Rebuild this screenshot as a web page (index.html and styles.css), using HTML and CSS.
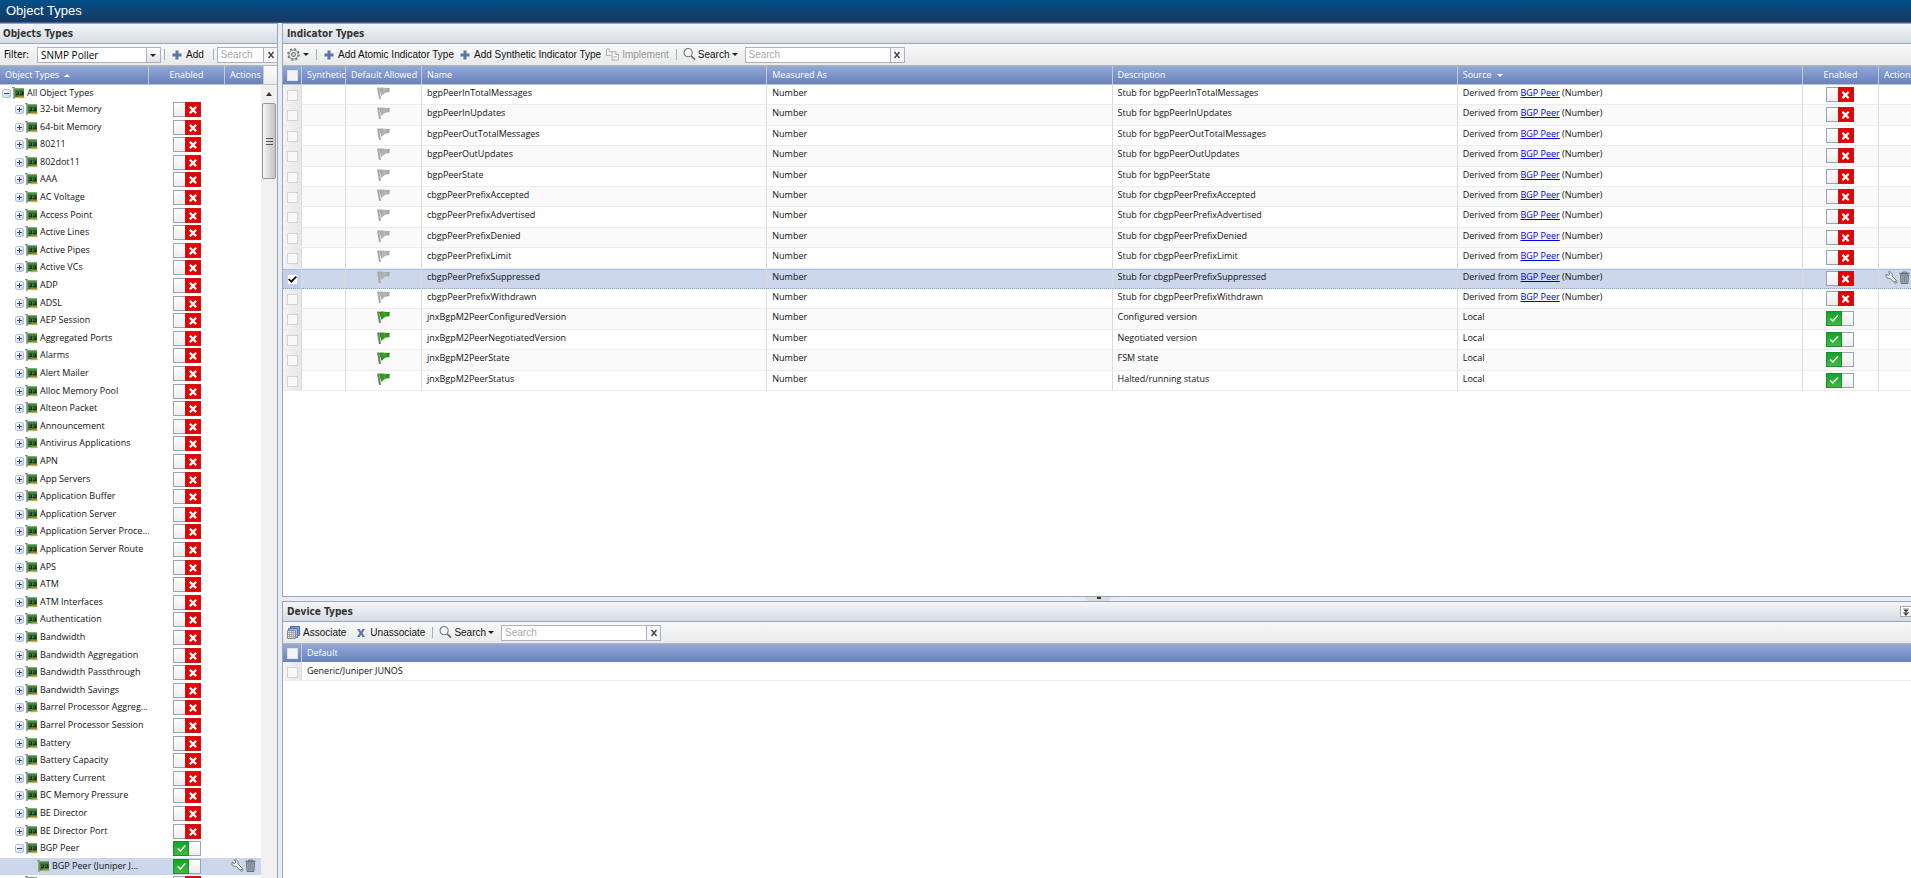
FILE: index.html
```html
<!DOCTYPE html>
<html lang="en">
<head>
<meta charset="utf-8">
<title>Object Types</title>
<link rel="stylesheet" href="styles.css">
</head>
<body>
<svg class="defs" aria-hidden="true">
  <linearGradient id="flag-green" x1="0" x2="1"><stop offset="0" stop-color="#1c8412"/><stop offset=".5" stop-color="#3fa81f"/><stop offset="1" stop-color="#1f7d12"/></linearGradient>
  <linearGradient id="flag-grey" x1="0" x2="1"><stop offset="0" stop-color="#a2a2a2"/><stop offset=".5" stop-color="#b8b8b8"/><stop offset="1" stop-color="#a0a0a0"/></linearGradient>
  <symbol id="plus" viewBox="0 0 10 10"><path d="M3.5 .5h3v3h3v3h-3v3h-3v-3h-3v-3h3z" fill="#5878ab"/></symbol>
  <symbol id="cross" viewBox="0 0 8 8"><path d="M0 0h2.6L4 2.4 5.4 0H8L5.4 4 8 8H5.4L4 5.6 2.6 8H0l2.6-4z" fill="#5577a5"/></symbol>
  <symbol id="close" viewBox="0 0 8 8"><path d="M1.500 1l5 6M6.500 1l-5 6" stroke="#3c3c3c" stroke-width="1.3"/></symbol>
  <symbol id="gear" viewBox="0 0 14 14"><g fill="none" stroke="#6b6f72"><circle cx="7" cy="7" r="6" stroke-width="1.400" stroke-dasharray="2.300 2.410"/><circle cx="7" cy="7" r="4.900" stroke-width="1"/><circle cx="7" cy="7" r="2" stroke-width="1.200"/></g></symbol>
  <symbol id="lens" viewBox="0 0 14 14"><circle cx="5.5" cy="5" r="4.4" fill="#f6f6f6" stroke="#74777a" stroke-width="1.2"/><path d="M8.8 8.5l4.200 4" stroke="#66696c" stroke-width="1.6"/></symbol>
  <symbol id="pages" viewBox="0 0 14 13"><g fill="#f4f4f4" stroke="#a9a9a9"><path d="M3.500.5h-3v7h5"/><path d="M3.500 .5v3h3"/><path d="M6.500 3.500h4l3 3v6h-7z"/><path d="M10.500 3.500v3h3M8 9h4"/></g></symbol>
  <symbol id="assoc" viewBox="0 0 13 13"><path d="M3.500.5h9v9h-9z" fill="#7c9ce0" stroke="#4869b5"/><path d="M1.500 2.500h9v9h-9z" fill="#a8bce8" stroke="#5576bd"/><path d="M.5 4.500h8v8h-8z" fill="#e4e4e4" stroke="#8a8a8a"/><path d="M2.500 5v7M4.500 5v7M6.500 5v7M1 6.500h7M1 8.500h7M1 10.500h7" stroke="#999" stroke-width=".7"/></symbol>
  <symbol id="board" viewBox="0 0 13 12"><path d="M0 .5h2V12" fill="none" stroke="#858c80" stroke-width="1.500"/><path d="M2.500 1.500H12v9H2.500z" fill="#3c8034"/><path d="M3 2h9" stroke="#5f9c52"/><path d="M4 4.500h3v3.500H4zM8 4.500h3.500v3.500H8z" fill="#17321a"/><path d="M6 9.500h6.500v1.700H6z" fill="#d9a441"/><path d="M4 6h2M8 6h2" stroke="#6a8068"/></symbol>
  <symbol id="flag-on" viewBox="0 0 13 12"><path d="M1 .5l2 11.500" stroke="#777" stroke-width="2"/><path d="M2 1C6 -.2 8 1.600 13 .8L12.300 3 12.600 5.200C9 4.800 7 6 4.500 9z" fill="url(#flag-green)"/></symbol>
  <symbol id="flag-off" viewBox="0 0 13 12"><path d="M1 .5l2 11.500" stroke="#a8a8a8" stroke-width="2"/><path d="M2 1C6 -.2 8 1.600 13 .8L12.300 3 12.600 5.200C9 4.800 7 6 4.500 9z" fill="url(#flag-grey)"/></symbol>
  <symbol id="wrench" viewBox="0 0 13 13"><path d="M3.500 .8L5 3 3.600 4.500 1 3.600C.4 6.200 2.800 8 5 7.200l4.500 4.600c1.400 1.200 3.300-.6 2.200-2.100L7 5C7.800 2.500 6 .2 3.500 .8z" fill="#f2f2f2" stroke="#70747b"/><circle cx="10.300" cy="10.500" r=".7" fill="#555"/></symbol>
  <symbol id="trash" viewBox="0 0 11 13"><path d="M3.500 2V1h4v1" fill="none" stroke="#6d7781"/><path d="M.5 2.500h10" stroke="#66717c" stroke-width="1.600"/><path d="M1.500 4h8l-.6 8.500H2.100z" fill="#a5b0ba" stroke="#66717c"/><path d="M3.800 5v6.500M5.500 5v6.500M7.200 5v6.500" stroke="#6b7680" stroke-width=".8"/></symbol>
</svg>

<header class="topbar"><h1>Object Types</h1></header>
<main class="workspace">
  <section class="panel objects">
    <h2 class="panel-title">Objects Types</h2>
    <div class="toolbar">
      <label class="filter-label" for="filter">Filter:</label>
      <span class="combo"><select id="filter"><option>SNMP Poller</option></select><i class="caret"></i></span>
      <span class="sep"></span>
      <button class="tool tool-add"><svg class="i10"><use href="#plus"/></svg>Add</button>
      <span class="sep"></span>
      <span class="search search-small"><input type="text" placeholder="Search" aria-label="Search object types"><button aria-label="Clear"><svg class="i8"><use href="#close"/></svg></button></span>
    </div>
    <table class="tree-head">
      <thead><tr><th class="t-name">Object Types <i class="sort up"></i></th><th class="t-enabled">Enabled</th><th class="t-actions">Actions</th><th class="t-fill"></th></tr></thead>
    </table>
    <div class="tree-wrap">
      <div class="tree-view"><table class="tree"><tbody id="tree"></tbody></table></div>
      <div class="scrollbar"><i class="arrow"></i><i class="thumb"></i></div>
    </div>
  </section>

  <div class="right">
    <section class="panel indicators">
      <h2 class="panel-title">Indicator Types</h2>
      <div class="toolbar">
        <button class="tool tool-gear" aria-label="Settings"><svg class="i13"><use href="#gear"/></svg><i class="caret"></i></button>
        <span class="sep"></span>
        <button class="tool tool-add"><svg class="i10"><use href="#plus"/></svg>Add Atomic Indicator Type</button>
        <button class="tool tool-synth"><svg class="i10"><use href="#plus"/></svg>Add Synthetic Indicator Type</button>
        <button class="tool tool-impl" disabled><svg class="i13"><use href="#pages"/></svg>Implement</button>
        <span class="sep"></span>
        <button class="tool tool-search"><svg class="i13"><use href="#lens"/></svg>Search<i class="caret"></i></button>
        <span class="search"><input type="text" placeholder="Search" aria-label="Search indicator types"><button aria-label="Clear"><svg class="i8"><use href="#close"/></svg></button></span>
      </div>
      <table class="grid">
        <thead><tr><th class="c-check"><input type="checkbox" class="tick" aria-label="Select all"></th><th class="c-synth">Synthetic</th><th class="c-allowed">Default Allowed</th><th>Name</th><th>Measured As</th><th>Description</th><th>Source <i class="sort down"></i></th><th class="c-enabled">Enabled</th><th class="c-actions">Actions</th></tr></thead>
        <tbody id="indicators"></tbody>
      </table>
    </section>
    <div class="splitter"><i></i></div>
    <section class="panel devices">
      <h2 class="panel-title">Device Types<button class="collapse" aria-label="Collapse"><svg viewBox="0 0 8 8"><path d="M1 1h6M2 2h4l-2 2zM1 4.500h6M2 5.500h4l-2 2z" fill="#333" stroke="#333" stroke-width=".6"/></svg></button></h2>
      <div class="toolbar">
        <button class="tool"><svg class="i13"><use href="#assoc"/></svg>Associate</button>
        <button class="tool tool-un"><svg class="i8"><use href="#cross"/></svg>Unassociate</button>
        <span class="sep"></span>
        <button class="tool tool-search"><svg class="i13"><use href="#lens"/></svg>Search<i class="caret"></i></button>
        <span class="search"><input type="text" placeholder="Search" aria-label="Search device types"><button aria-label="Clear"><svg class="i8"><use href="#close"/></svg></button></span>
      </div>
      <table class="grid device-grid">
        <thead><tr><th class="c-check"><input type="checkbox" class="tick" aria-label="Select all devices"></th><th>Default</th></tr></thead>
        <tbody><tr><td class="c-check"><input type="checkbox" class="tick" aria-label="Generic/Juniper JUNOS"></td><td>Generic/Juniper JUNOS</td></tr></tbody>
      </table>
    </section>
  </div>
</main>
<script src="app.js"></script>
</body>
</html>
```
FILE: app.js
```js
const types = ['32-bit Memory', '64-bit Memory', '80211', '802dot11', 'AAA', 'AC Voltage', 'Access Point', 'Active Lines', 'Active Pipes', 'Active VCs', 'ADP', 'ADSL', 'AEP Session', 'Aggregated Ports', 'Alarms', 'Alert Mailer', 'Alloc Memory Pool', 'Alteon Packet', 'Announcement', 'Antivirus Applications', 'APN', 'App Servers', 'Application Buffer', 'Application Server', 'Application Server Proce...', 'Application Server Route', 'APS', 'ATM', 'ATM Interfaces', 'Authentication', 'Bandwidth', 'Bandwidth Aggregation', 'Bandwidth Passthrough', 'Bandwidth Savings', 'Barrel Processor Aggreg...', 'Barrel Processor Session', 'Battery', 'Battery Capacity', 'Battery Current', 'BC Memory Pressure', 'BE Director', 'BE Director Port'];

const icon = (name, cls) => `<svg class="${cls}"><use href="#${name}"/></svg>`;
const toggle = (on, label) => `<input type="checkbox" class="toggle" aria-label="Enable ${label}"${on ? ' checked' : ''}>`;
const actions = `<div class="acts"><button aria-label="Edit">${icon('wrench', 'i13')}</button><button aria-label="Delete">${icon('trash', 'trash')}</button></div>`;

function node(name, level, mark, on, selected) {
  const expander = mark ? `<button class="expander ${mark}" aria-label="Toggle ${name}"></button>` : '<i class="expander-space"></i>';
  return `<tr class="level-${level}${selected ? ' selected' : ''}">
    <td class="t-name"><div class="node">${expander}${icon('board', 'board')}<span>${name}</span></div></td>
    <td class="t-enabled">${level ? toggle(on, name) : ''}</td>
    <td class="t-actions">${selected ? actions : ''}</td></tr>`;
}

document.getElementById('tree').innerHTML =
  node('All Object Types', 0, 'minus') +
  types.map(name => node(name, 1, 'plus', false)).join('') +
  node('BGP Peer', 1, 'minus', true) +
  node('BGP Peer (Juniper J...', 2, '', true, true) +
  node('', 1, 'plus', false);

const stubs = ['bgpPeerInTotalMessages', 'bgpPeerInUpdates', 'bgpPeerOutTotalMessages', 'bgpPeerOutUpdates', 'bgpPeerState', 'cbgpPeerPrefixAccepted', 'cbgpPeerPrefixAdvertised', 'cbgpPeerPrefixDenied', 'cbgpPeerPrefixLimit', 'cbgpPeerPrefixSuppressed', 'cbgpPeerPrefixWithdrawn'];
const local = [
  ['jnxBgpM2PeerConfiguredVersion', 'Configured version'],
  ['jnxBgpM2PeerNegotiatedVersion', 'Negotiated version'],
  ['jnxBgpM2PeerState', 'FSM state'],
  ['jnxBgpM2PeerStatus', 'Halted/running status']
];

function row(name, description, source, on) {
  const selected = name === 'cbgpPeerPrefixSuppressed';
  return `<tr class="${selected ? 'selected' : ''}">
    <td class="c-check"><input type="checkbox" class="tick" aria-label="${name}"${selected ? ' checked' : ''}></td>
    <td></td><td class="c-allowed">${icon(on ? 'flag-on' : 'flag-off', 'flag')}</td>
    <td>${name}</td><td>Number</td><td>${description}</td><td>${source}</td>
    <td class="c-enabled">${toggle(on, name)}</td><td class="c-actions">${selected ? actions : ''}</td></tr>`;
}

document.getElementById('indicators').innerHTML =
  stubs.map(name => row(name, 'Stub for ' + name, 'Derived from <a href="#">BGP Peer</a> (Number)', false)).join('') +
  local.map(([name, description]) => row(name, description, 'Local', true)).join('');
```
FILE: styles.css
```css
*, *::before, *::after { box-sizing: border-box; }
body {
  margin: 0;
  height: 100vh;
  display: flex;
  flex-direction: column;
  overflow: hidden;
  background: #e9edf2;
  color: #111;
  font: 9px/14px "Open Sans", "Noto Sans", sans-serif;
}
button, input, select { font: inherit; color: inherit; margin: 0; padding: 0; border: 0; background: none; border-radius: 0; outline: 0; }
svg { display: block; flex: none; }
.defs { position: absolute; width: 0; height: 0; }
.i8 { width: 8px; height: 8px; }
.i10 { width: 10px; height: 10px; }
.i13 { width: 13px; height: 13px; }
.flag { width: 13px; height: 12px; }
.trash { width: 11px; height: 13px; }

.topbar { flex: none; height: 23px; padding-left: 6px; background: linear-gradient(#005089, #1b3960); border-bottom: 1px solid #3560a0; }
.topbar h1 { margin: 0; font: 13px/21px "Liberation Sans", Arial, sans-serif; color: #fff; }

.workspace { flex: 1; min-height: 0; display: flex; gap: 4px; }
.right { flex: 1; min-width: 0; display: flex; flex-direction: column; }
.panel { display: flex; flex-direction: column; min-height: 0; overflow: hidden; background: #fff; border-top: 1px solid #99a7bd; }
.objects { width: 278px; flex: none; border-right: 1px solid #99a7bd; }
.indicators { flex: 1; border-left: 1px solid #99a7bd; border-bottom: 1px solid #99a7bd; }
.devices { flex: 0 0 277px; border-left: 1px solid #99a7bd; }
.panel-title {
  flex: none;
  display: flex;
  align-items: center;
  justify-content: space-between;
  height: 20px;
  margin: 0;
  padding-left: 4px;
  font: bold 10px/14px "DejaVu Sans Condensed", "DejaVu Sans", sans-serif;
  color: #333;
  background: linear-gradient(#f4f6f9, #d5dce4);
  border-bottom: 1px solid #99a7bd;
}
.objects .panel-title { padding-left: 3px; }
.collapse { width: 11px; height: 11px; padding: 1px; background: #fff; border: 1px solid #aaa; border-right: 0; }
.collapse svg { width: 8px; height: 8px; }

.toolbar {
  flex: none;
  display: flex;
  align-items: center;
  height: 22px;
  padding-left: 4px;
  font-family: "Liberation Sans", Arial, sans-serif;
  font-size: 10px;
  background: linear-gradient(#f9f9f9, #e8e9e9);
  border-bottom: 1px solid #b2b5b8;
  white-space: nowrap;
}
.tool { display: flex; align-items: center; gap: 3px; }
.tool-add { margin-left: 7px; gap: 4px; }
.tool-synth { margin-left: 6px; gap: 4px; }
.tool-impl { margin-left: 5px; color: #999; }
.tool-search { margin-left: 6px; gap: 2px; }
.tool-un { margin-left: 11px; gap: 5px; }
.sep { flex: none; width: 1px; height: 11px; margin-left: 7px; background: #a3adc0; }
.caret { width: 0; height: 0; border: 3px solid transparent; border-top-color: #222; border-bottom: 0; }
.filter-label { flex: none; width: 33px; color: #000; font: 10px/14px "DejaVu Sans Condensed", sans-serif; }
.combo { flex: none; position: relative; width: 124px; height: 16px; }
.combo select { display: block; appearance: none; width: 100%; height: 100%; padding-left: 3px; color: #000; background: #fff; border: 1px solid #a9b0c8; font-family: "Open Sans", sans-serif; }
.combo::after { content: ""; position: absolute; right: 1px; top: 1px; width: 14px; height: 14px; background: linear-gradient(#fff, #e2e2e2); border-left: 1px solid #a9b0c8; }
.combo .caret { position: absolute; right: 5px; top: 7px; z-index: 1; }
.combo + .sep { margin-left: 3px; }
.objects .tool-add + .sep { margin-left: 9px; }
.search { display: flex; width: 160px; height: 16px; margin-left: 7px; background: #fff; border: 1px solid #a9b0c8; }
.search-small { width: auto; flex: 1 1 0; min-width: 0; margin-left: 3px; border-right: 0; }
.search input { flex: 1 1 0; width: 0; min-width: 0; padding-left: 3px; }
.search input::placeholder { color: #aaa; opacity: 1; }
.search button { flex: none; display: flex; align-items: center; justify-content: center; width: 14px; background: #f7f7f7; border-left: 1px solid #a9b0c8; }

table { width: 100%; border-collapse: separate; border-spacing: 0; table-layout: fixed; }
th, td { padding: 0; overflow: hidden; white-space: nowrap; text-align: left; font-weight: normal; }
th { height: 19px; padding: 0 0 1px 5px; color: #fff; background: linear-gradient(#95a8d7, #6882be); border-bottom: 1px solid #c3c6cc; border-right: 1px solid #c8cbd0; }
.sort { display: inline-block; margin-left: 3px; border: 3px solid transparent; vertical-align: middle; }
.sort.up { border-bottom-color: #fff; border-top: 0; }
.sort.down { border-top-color: #fff; border-bottom: 0; }

.tree-head { flex: none; }
.t-name { width: 149px; }
.t-enabled { width: 76px; text-align: center; }
.t-actions { width: 39px; }
th.t-enabled { padding-left: 0; }
th.t-fill { background: linear-gradient(#fafafa, #ececec); border-right: 0; padding: 0; }
.tree-wrap { flex: 1; min-height: 0; display: flex; }
.tree-view { flex: 1; min-width: 0; overflow: hidden; }
.tree tr { height: 18px; }
.tree tr:nth-child(5n+3), .tree tr:nth-child(5n+5) { height: 17px; }
.tree .level-0 { height: 16px; }
.tree td { height: inherit; padding-top: 1px; line-height: 0; vertical-align: top; }
.tree .t-actions { width: 36px; }
.acts { display: flex; gap: 1px; padding-left: 6px; }
.node { display: flex; align-items: center; padding-left: 15px; line-height: 14px; }
.level-0 .node { padding-left: 2px; }
.level-2 .node { padding-left: 27px; }
.node span { margin-left: 2px; }
.board { width: 13px; height: 12px; }
.expander { flex: none; position: relative; width: 9px; height: 9px; margin-right: 1px; background: linear-gradient(135deg, #fff, #c3d0e6); border: 1px solid #b0bfd8; border-radius: 2px; }
.expander-space { flex: none; width: 10px; }
.expander::before { content: ""; position: absolute; left: 1px; top: 3px; width: 5px; height: 1px; background: #355080; }
.expander.plus::after { content: ""; position: absolute; left: 3px; top: 1px; width: 1px; height: 5px; background: #355080; }
.scrollbar { display: flex; flex-direction: column; align-items: center; width: 16px; background: #f0f0f0; }
.scrollbar .arrow { margin-top: 7px; border: 3px solid transparent; border-top: 0; border-bottom: 4px solid #333; }
.scrollbar .thumb { width: 14px; height: 76px; margin-top: 7px; border: 1px solid #999; border-radius: 2px; background: linear-gradient(#555, #555) center 34px / 7px 1px no-repeat, linear-gradient(#555, #555) center 37px / 7px 1px no-repeat, linear-gradient(#555, #555) center 40px / 7px 1px no-repeat, linear-gradient(90deg, #f5f5f5, #dcdcdc 50%, #c3c3c6); }

.toggle { appearance: none; display: block; position: relative; width: 28px; height: 15px; margin: 0 auto; border: 1px solid #98a3b3; background: linear-gradient(#fff, #ededed); }
.toggle::before { content: ""; position: absolute; right: -1px; top: -1px; width: 16px; height: 15px; background: #e60000; border: 1px solid #c81818; }
.toggle::after { content: ""; position: absolute; right: 3px; top: 3px; width: 8px; height: 8px; background: #fff; clip-path: polygon(0 20%, 20% 0, 50% 28%, 80% 0, 100% 20%, 70% 50%, 100% 80%, 80% 100%, 50% 72%, 20% 100%, 0 80%, 30% 50%); }
.toggle:checked::before { right: auto; left: -1px; background: linear-gradient(#10a52c, #43b943); border-color: #178f2c; }
.toggle:checked::after { right: auto; left: 3px; top: 3px; width: 9px; height: 7px; clip-path: polygon(0 55%, 12% 42%, 35% 70%, 88% 0, 100% 10%, 38% 100%); }

.c-check { width: 19px; }
.c-synth { width: 44px; }
.c-allowed { width: 76px; }
.c-enabled { width: 76px; text-align: center; }
.c-actions { width: 32px; }
th.c-enabled { padding-left: 0; }
.c-actions { border-right: 0; }
.grid tbody tr { height: 20px; }
.grid tbody tr:nth-child(5n+2), .grid tbody tr:nth-child(5n+4) { height: 21px; }
.grid tbody tr:nth-child(even) { background: #fafafa; }
.grid td { height: inherit; padding: 1px 0 0 5px; vertical-align: top; border-bottom: 1px solid #ececec; border-right: 1px solid #dcdcdc; }
.grid td.c-check { padding: 5px 0 0 4px; background: linear-gradient(90deg, #f4f4f4, #e7e7e7); }
.grid th.c-check { padding: 0 0 0 4px; }
.grid td.c-allowed { padding: 2px 0 0 31px; }
.grid td.c-enabled { padding: 2px 2px 0 0; }
.grid td.c-actions { padding: 2px 0 0; border-right: 0; }
.tick { appearance: none; display: block; width: 11px; height: 11px; background: #f8f8f8; border: 1px solid #d0d4dc; }
.grid th .tick { background: #f4f4f4; border-color: #dde1ea; }
.tick:checked { background: #fff; position: relative; }
.tick:checked::after { content: ""; position: absolute; left: 0; top: 1px; width: 9px; height: 7px; background: #111; clip-path: polygon(0 50%, 15% 35%, 36% 62%, 86% 0, 100% 14%, 38% 100%); }
.grid tbody tr.selected, .tree tr.selected { background: #ccd7ec; }
.grid .selected td { border-bottom: 1px dotted #8ba4d8; box-shadow: inset 0 1px #a9bbe2; }
.grid .selected td.c-check { background: #c2cfe9; }
.grid a { color: #00d; }
.device-grid th { height: 18px; border-bottom: 0; }
.device-grid th:last-child, .device-grid td:last-child { border-right: 0; }
.grid.device-grid tbody tr { height: 19px; }
.device-grid td:last-child { padding-top: 2px; }

.splitter { flex: none; display: flex; justify-content: center; height: 4px; padding-left: 4px; }
.splitter i { width: 28px; height: 4px; background: linear-gradient(#333, #333) center top / 4px 2px no-repeat, #dedede; clip-path: polygon(0 0, 100% 0, 90% 100%, 10% 100%); }
```
